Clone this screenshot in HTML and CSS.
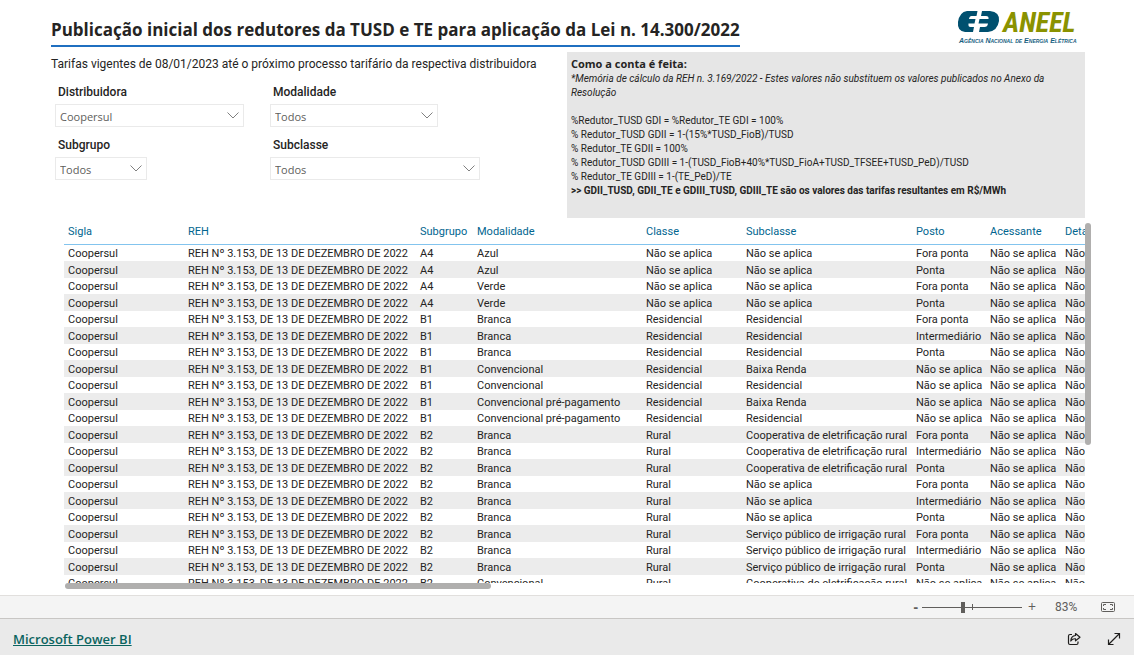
FILE: index.html
```html
<!DOCTYPE html>
<html lang="pt-BR">
<head>
<meta charset="utf-8">
<meta name="viewport" content="width=device-width, initial-scale=1">
<title>Publicação inicial dos redutores da TUSD e TE</title>
<link rel="stylesheet" href="styles.css">
</head>
<body>
<main class="report">
  <header class="report-header">
    <h1 class="title">Publicação inicial dos redutores da TUSD e TE para aplicação da Lei n. 14.300/2022</h1>
    <svg class="logo" viewBox="0 0 120 36" role="img" aria-label="ANEEL - Agência Nacional de Energia Elétrica">
      <path fill="#00506f" d="M10 3H20.500L19.500 8H14.500Q12.500 8 12 11H18.500L17.500 15.500H11.500Q11 19 13.500 19H17L16 24H8Q0 23 1 14Q2.500 4 10 3Z"/>
      <path fill="#00506f" d="M25 3H33Q43 4 42 13Q40.500 23 31 24H22L23 19H27.500Q30.500 19 31 15.500H21.500L22.500 11H31.500Q32 8 29 8H24Z"/>
      <text class="logo-name" x="46" y="24">ANEEL</text>
      <text class="logo-sub" x="2" y="35">Agência Nacional de Energia Elétrica</text>
    </svg>
  </header>

  <section class="top">
    <div class="filters-side">
      <p class="subtitle">Tarifas vigentes de 08/01/2023 até o próximo processo tarifário da respectiva distribuidora</p>
      <form class="filters">
        <div class="filter">
          <label for="distribuidora">Distribuidora</label>
          <div class="select-box w-large"><select id="distribuidora"><option>Coopersul</option></select><svg class="chevron" viewBox="0 0 12 7"><path d="M.5.5 6 6 11.500.5"/></svg></div>
        </div>
        <div class="filter">
          <label for="modalidade">Modalidade</label>
          <div class="select-box w-medium"><select id="modalidade"><option>Todos</option></select><svg class="chevron" viewBox="0 0 12 7"><path d="M.5.5 6 6 11.500.5"/></svg></div>
        </div>
        <div class="filter">
          <label for="subgrupo">Subgrupo</label>
          <div class="select-box w-small"><select id="subgrupo"><option>Todos</option></select><svg class="chevron" viewBox="0 0 12 7"><path d="M.5.5 6 6 11.500.5"/></svg></div>
        </div>
        <div class="filter">
          <label for="subclasse">Subclasse</label>
          <div class="select-box w-xlarge"><select id="subclasse"><option>Todos</option></select><svg class="chevron" viewBox="0 0 12 7"><path d="M.5.5 6 6 11.500.5"/></svg></div>
        </div>
      </form>
    </div>
    <aside class="notes">
      <h2>Como a conta é feita:</h2>
      <p class="memo">*Memória de cálculo da REH n. 3.169/2022 - Estes valores não substituem os valores publicados no Anexo da Resolução</p>
      <p>%Redutor_TUSD GDI = %Redutor_TE GDI = 100%</p>
      <p>% Redutor_TUSD GDII = 1-(15%*TUSD_FioB)/TUSD</p>
      <p>% Redutor_TE GDII = 100%</p>
      <p>% Redutor_TUSD GDIII = 1-(TUSD_FioB+40%*TUSD_FioA+TUSD_TFSEE+TUSD_PeD)/TUSD</p>
      <p>% Redutor_TE GDIII = 1-(TE_PeD)/TE</p>
      <p class="strong">&gt;&gt; GDII_TUSD, GDII_TE e GDIII_TUSD, GDIII_TE são os valores das tarifas resultantes em R$/MWh</p>
    </aside>
  </section>

  <section class="grid-visual">
    <div class="grid-view">
      <table class="rates">
        <colgroup><col class="c-sigla"><col class="c-reh"><col class="c-sub"><col class="c-mod"><col class="c-classe"><col class="c-subclasse"><col class="c-posto"><col class="c-acess"><col class="c-det"></colgroup>
        <thead><tr><th>Sigla</th><th>REH</th><th>Subgrupo</th><th>Modalidade</th><th>Classe</th><th>Subclasse</th><th>Posto</th><th>Acessante</th><th>Detalhe</th></tr></thead>
        <tbody>
          <tr><td>Coopersul</td><td>REH Nº 3.153, DE 13 DE DEZEMBRO DE 2022</td><td>A4</td><td>Azul</td><td>Não se aplica</td><td>Não se aplica</td><td>Fora ponta</td><td>Não se aplica</td><td>Não se aplica</td></tr>
          <tr><td>Coopersul</td><td>REH Nº 3.153, DE 13 DE DEZEMBRO DE 2022</td><td>A4</td><td>Azul</td><td>Não se aplica</td><td>Não se aplica</td><td>Ponta</td><td>Não se aplica</td><td>Não se aplica</td></tr>
          <tr><td>Coopersul</td><td>REH Nº 3.153, DE 13 DE DEZEMBRO DE 2022</td><td>A4</td><td>Verde</td><td>Não se aplica</td><td>Não se aplica</td><td>Fora ponta</td><td>Não se aplica</td><td>Não se aplica</td></tr>
          <tr><td>Coopersul</td><td>REH Nº 3.153, DE 13 DE DEZEMBRO DE 2022</td><td>A4</td><td>Verde</td><td>Não se aplica</td><td>Não se aplica</td><td>Ponta</td><td>Não se aplica</td><td>Não se aplica</td></tr>
          <tr><td>Coopersul</td><td>REH Nº 3.153, DE 13 DE DEZEMBRO DE 2022</td><td>B1</td><td>Branca</td><td>Residencial</td><td>Residencial</td><td>Fora ponta</td><td>Não se aplica</td><td>Não se aplica</td></tr>
          <tr><td>Coopersul</td><td>REH Nº 3.153, DE 13 DE DEZEMBRO DE 2022</td><td>B1</td><td>Branca</td><td>Residencial</td><td>Residencial</td><td>Intermediário</td><td>Não se aplica</td><td>Não se aplica</td></tr>
          <tr><td>Coopersul</td><td>REH Nº 3.153, DE 13 DE DEZEMBRO DE 2022</td><td>B1</td><td>Branca</td><td>Residencial</td><td>Residencial</td><td>Ponta</td><td>Não se aplica</td><td>Não se aplica</td></tr>
          <tr><td>Coopersul</td><td>REH Nº 3.153, DE 13 DE DEZEMBRO DE 2022</td><td>B1</td><td>Convencional</td><td>Residencial</td><td>Baixa Renda</td><td>Não se aplica</td><td>Não se aplica</td><td>Não se aplica</td></tr>
          <tr><td>Coopersul</td><td>REH Nº 3.153, DE 13 DE DEZEMBRO DE 2022</td><td>B1</td><td>Convencional</td><td>Residencial</td><td>Residencial</td><td>Não se aplica</td><td>Não se aplica</td><td>Não se aplica</td></tr>
          <tr><td>Coopersul</td><td>REH Nº 3.153, DE 13 DE DEZEMBRO DE 2022</td><td>B1</td><td>Convencional pré-pagamento</td><td>Residencial</td><td>Baixa Renda</td><td>Não se aplica</td><td>Não se aplica</td><td>Não se aplica</td></tr>
          <tr><td>Coopersul</td><td>REH Nº 3.153, DE 13 DE DEZEMBRO DE 2022</td><td>B1</td><td>Convencional pré-pagamento</td><td>Residencial</td><td>Residencial</td><td>Não se aplica</td><td>Não se aplica</td><td>Não se aplica</td></tr>
          <tr><td>Coopersul</td><td>REH Nº 3.153, DE 13 DE DEZEMBRO DE 2022</td><td>B2</td><td>Branca</td><td>Rural</td><td>Cooperativa de eletrificação rural</td><td>Fora ponta</td><td>Não se aplica</td><td>Não se aplica</td></tr>
          <tr><td>Coopersul</td><td>REH Nº 3.153, DE 13 DE DEZEMBRO DE 2022</td><td>B2</td><td>Branca</td><td>Rural</td><td>Cooperativa de eletrificação rural</td><td>Intermediário</td><td>Não se aplica</td><td>Não se aplica</td></tr>
          <tr><td>Coopersul</td><td>REH Nº 3.153, DE 13 DE DEZEMBRO DE 2022</td><td>B2</td><td>Branca</td><td>Rural</td><td>Cooperativa de eletrificação rural</td><td>Ponta</td><td>Não se aplica</td><td>Não se aplica</td></tr>
          <tr><td>Coopersul</td><td>REH Nº 3.153, DE 13 DE DEZEMBRO DE 2022</td><td>B2</td><td>Branca</td><td>Rural</td><td>Não se aplica</td><td>Fora ponta</td><td>Não se aplica</td><td>Não se aplica</td></tr>
          <tr><td>Coopersul</td><td>REH Nº 3.153, DE 13 DE DEZEMBRO DE 2022</td><td>B2</td><td>Branca</td><td>Rural</td><td>Não se aplica</td><td>Intermediário</td><td>Não se aplica</td><td>Não se aplica</td></tr>
          <tr><td>Coopersul</td><td>REH Nº 3.153, DE 13 DE DEZEMBRO DE 2022</td><td>B2</td><td>Branca</td><td>Rural</td><td>Não se aplica</td><td>Ponta</td><td>Não se aplica</td><td>Não se aplica</td></tr>
          <tr><td>Coopersul</td><td>REH Nº 3.153, DE 13 DE DEZEMBRO DE 2022</td><td>B2</td><td>Branca</td><td>Rural</td><td>Serviço público de irrigação rural</td><td>Fora ponta</td><td>Não se aplica</td><td>Não se aplica</td></tr>
          <tr><td>Coopersul</td><td>REH Nº 3.153, DE 13 DE DEZEMBRO DE 2022</td><td>B2</td><td>Branca</td><td>Rural</td><td>Serviço público de irrigação rural</td><td>Intermediário</td><td>Não se aplica</td><td>Não se aplica</td></tr>
          <tr><td>Coopersul</td><td>REH Nº 3.153, DE 13 DE DEZEMBRO DE 2022</td><td>B2</td><td>Branca</td><td>Rural</td><td>Serviço público de irrigação rural</td><td>Ponta</td><td>Não se aplica</td><td>Não se aplica</td></tr>
          <tr><td>Coopersul</td><td>REH Nº 3.153, DE 13 DE DEZEMBRO DE 2022</td><td>B2</td><td>Convencional</td><td>Rural</td><td>Cooperativa de eletrificação rural</td><td>Não se aplica</td><td>Não se aplica</td><td>Não se aplica</td></tr>
        </tbody>
      </table>
    </div>
    <div class="track-y"><div class="thumb-y"></div></div>
    <div class="track-x"><div class="thumb-x"></div></div>
  </section>
</main>

<div class="zoom-bar">
  <button type="button" class="zoom-btn minus" aria-label="Reduzir">-</button>
  <div class="slider"><input type="range" min="10" max="400" value="167" aria-label="Zoom"></div>
  <button type="button" class="zoom-btn" aria-label="Ampliar">+</button>
  <span class="zoom-value">83%</span>
  <button type="button" class="icon-btn fit" aria-label="Ajustar à página">
    <svg width="14" height="10" viewBox="0 0 14 10" fill="none" stroke="#605e5c"><rect x=".5" y=".5" width="13" height="9" rx="1"/><path d="M5 2.500H2.500V4M2.500 6V7.500H5M9 2.500H11.500V4M11.500 6V7.500H9"/></svg>
  </button>
</div>

<footer class="footer">
  <a href="#powerbi" class="brand">Microsoft Power BI</a>
  <div class="actions">
    <button type="button" class="icon-btn" aria-label="Compartilhar">
      <svg width="14" height="14" viewBox="0 0 14 14" fill="none" stroke="#201f1e" stroke-width="1.200" stroke-linejoin="round"><path d="M5 2.500H3Q1.500 2.500 1.500 4V11Q1.500 12.500 3 12.500H9.500Q11 12.500 11 11V9.500"/><path d="M8.500 1.500 13 5.200 8.500 8.800V6.800Q5.500 6.500 3.800 9Q4 4 8.500 3.500Z"/></svg>
    </button>
    <button type="button" class="icon-btn" aria-label="Tela inteira">
      <svg width="14" height="14" viewBox="0 0 14 14" fill="none" stroke="#201f1e" stroke-width="1.200"><path d="M1.500 12.500 12.500 1.500M7.500 1.500H12.500V6.500M1.500 7.500V12.500H6.500"/></svg>
    </button>
  </div>
</footer>
</body>
</html>
```
FILE: styles.css
```css
* { box-sizing: border-box; }

body {
  margin: 0;
  height: 100vh;
  display: flex;
  flex-direction: column;
  background: #fff;
  color: #252423;
  font-family: Roboto, "Open Sans", sans-serif;
  font-size: 11px;
}

h1, h2, p { margin: 0; }

button {
  margin: 0;
  padding: 0;
  border: 0;
  background: none;
  font: inherit;
  color: inherit;
}

.report {
  flex: 1;
  min-height: 0;
  display: flex;
  flex-direction: column;
  padding: 8px 43px 6px 51px;
}

/* Title and logo */
.report-header {
  display: flex;
  justify-content: space-between;
  align-items: flex-start;
  height: 44px;
  padding-right: 14px;
}

.title {
  height: 39px;
  border-bottom: 2px solid #1f6fc0;
  font-family: "Open Sans", sans-serif;
  font-size: 17px;
  line-height: 43px;
  font-weight: 700;
  white-space: nowrap;
}

.logo { width: 120px; height: 36px; flex: none; overflow: visible; }

.logo-name {
  font: italic bold 28px "Liberation Sans Narrow", "Roboto Condensed", "DejaVu Sans Condensed", sans-serif;
  fill: #8a9200;
}

.logo-sub {
  font: italic bold 7px "Liberation Sans Narrow", "Liberation Sans", sans-serif;
  font-variant: small-caps;
  fill: #17607f;
}

/* Filters and notes */
.top {
  display: grid;
  grid-template-columns: 516px 1fr;
  padding-right: 6px;
}

.subtitle {
  font-size: 12px;
  line-height: 24px;
  white-space: nowrap;
}

.filters {
  display: grid;
  grid-template-columns: 215px 1fr;
  row-gap: 6px;
  padding: 4px 0 0 4px;
}

.filter label {
  display: block;
  height: 24px;
  padding-left: 3px;
  font-size: 12px;
  font-weight: 500;
  line-height: 24px;
}

.select-box {
  display: flex;
  align-items: center;
  height: 23px;
  padding-right: 4px;
  border: 1px solid #eaeaea;
}

.select-box select {
  flex: 1;
  min-width: 0;
  height: 21px;
  padding: 2px 0 0 4px;
  border: 0;
  appearance: none;
  background: transparent;
  color: #605e5c;
  font: 11px "Open Sans", sans-serif;
}

.w-small { width: 92px; }
.w-medium { width: 168px; }
.w-large { width: 189px; }
.w-xlarge { width: 210px; }

.chevron {
  width: 12px;
  height: 7px;
  fill: none;
  stroke: #808080;
}

.notes {
  height: 166px;
  padding: 4px;
  background: #e6e6e6;
  font-size: 10px;
  line-height: 14px;
}

.notes h2 {
  font-family: "Open Sans", sans-serif;
  font-size: 11px;
  line-height: 16px;
  font-weight: 700;
}

.memo { padding-right: 32px; margin-bottom: 14px; font-style: italic; }
.strong { font-weight: 700; }

/* Table */
.grid-visual {
  flex: 1;
  min-height: 0;
  display: grid;
  grid-template-columns: 1fr 6px;
  grid-template-rows: 1fr 6px;
  padding: 0 0 0 13px;
}

.grid-view { overflow: hidden; min-height: 0; }

.rates {
  width: 1130px;
  table-layout: fixed;
  border-collapse: separate;
  border-spacing: 0;
}

.c-sigla { width: 120px; }
.c-reh { width: 232px; }
.c-sub { width: 57px; }
.c-mod { width: 169px; }
.c-classe { width: 100px; }
.c-subclasse { width: 170px; }
.c-posto { width: 74px; }
.c-acess { width: 75px; }

.rates th {
  height: 27px;
  padding: 0 4px;
  border-bottom: 1px solid #83c4ee;
  color: #01658f;
  font-weight: 400;
  text-align: left;
}

.rates td {
  height: 16px;
  padding: 2px 0 0 4px;
  line-height: 14px;
  white-space: nowrap;
}

.rates tr:nth-child(even) td { height: 17px; background: #ececec; }

.track-y { padding-top: 5px; }
.thumb-y { height: 222px; border-radius: 3px; background: #b0afae; }
.track-x { padding-left: 1px; }
.thumb-x { width: 426px; height: 6px; border-radius: 3px; background: #b0afae; }

/* Zoom bar */
.zoom-bar {
  flex: none;
  display: flex;
  align-items: center;
  justify-content: flex-end;
  height: 23px;
  padding-right: 19px;
  border-top: 1px solid #e1dfdd;
  background: #f4f4f4;
  color: #605e5c;
}

.zoom-btn {
  width: 12px;
  height: 20px;
  font-family: "Open Sans", sans-serif;
  font-size: 14px;
  line-height: 20px;
}

.minus { font-weight: 700; text-align: right; }

.slider {
  display: flex;
  align-items: center;
  width: 100px;
  margin: 0 4px;
  background: linear-gradient(#605e5c, #605e5c) 50px 50% / 1px 6px no-repeat;
}

.slider input {
  width: 100%;
  height: 12px;
  margin: 0;
  appearance: none;
  background: linear-gradient(#605e5c, #605e5c) 0 50% / 100% 1px no-repeat;
}

.slider input::-webkit-slider-thumb {
  appearance: none;
  width: 4px;
  height: 11px;
  background: #605e5c;
}

.zoom-value { width: 24px; margin: 0 22px 0 17px; font-size: 12px; }

.icon-btn { display: flex; align-items: center; justify-content: center; }

/* Footer */
.footer {
  flex: none;
  display: flex;
  align-items: center;
  justify-content: space-between;
  height: 37px;
  padding: 3px 13px 0;
  border-top: 1px solid #c8c6c4;
  background: #eaeaea;
}

.brand {
  color: #0b645f;
  font-family: "Open Sans", sans-serif;
  font-size: 13px;
  font-weight: 600;
}

.actions { display: flex; gap: 26px; }
```
